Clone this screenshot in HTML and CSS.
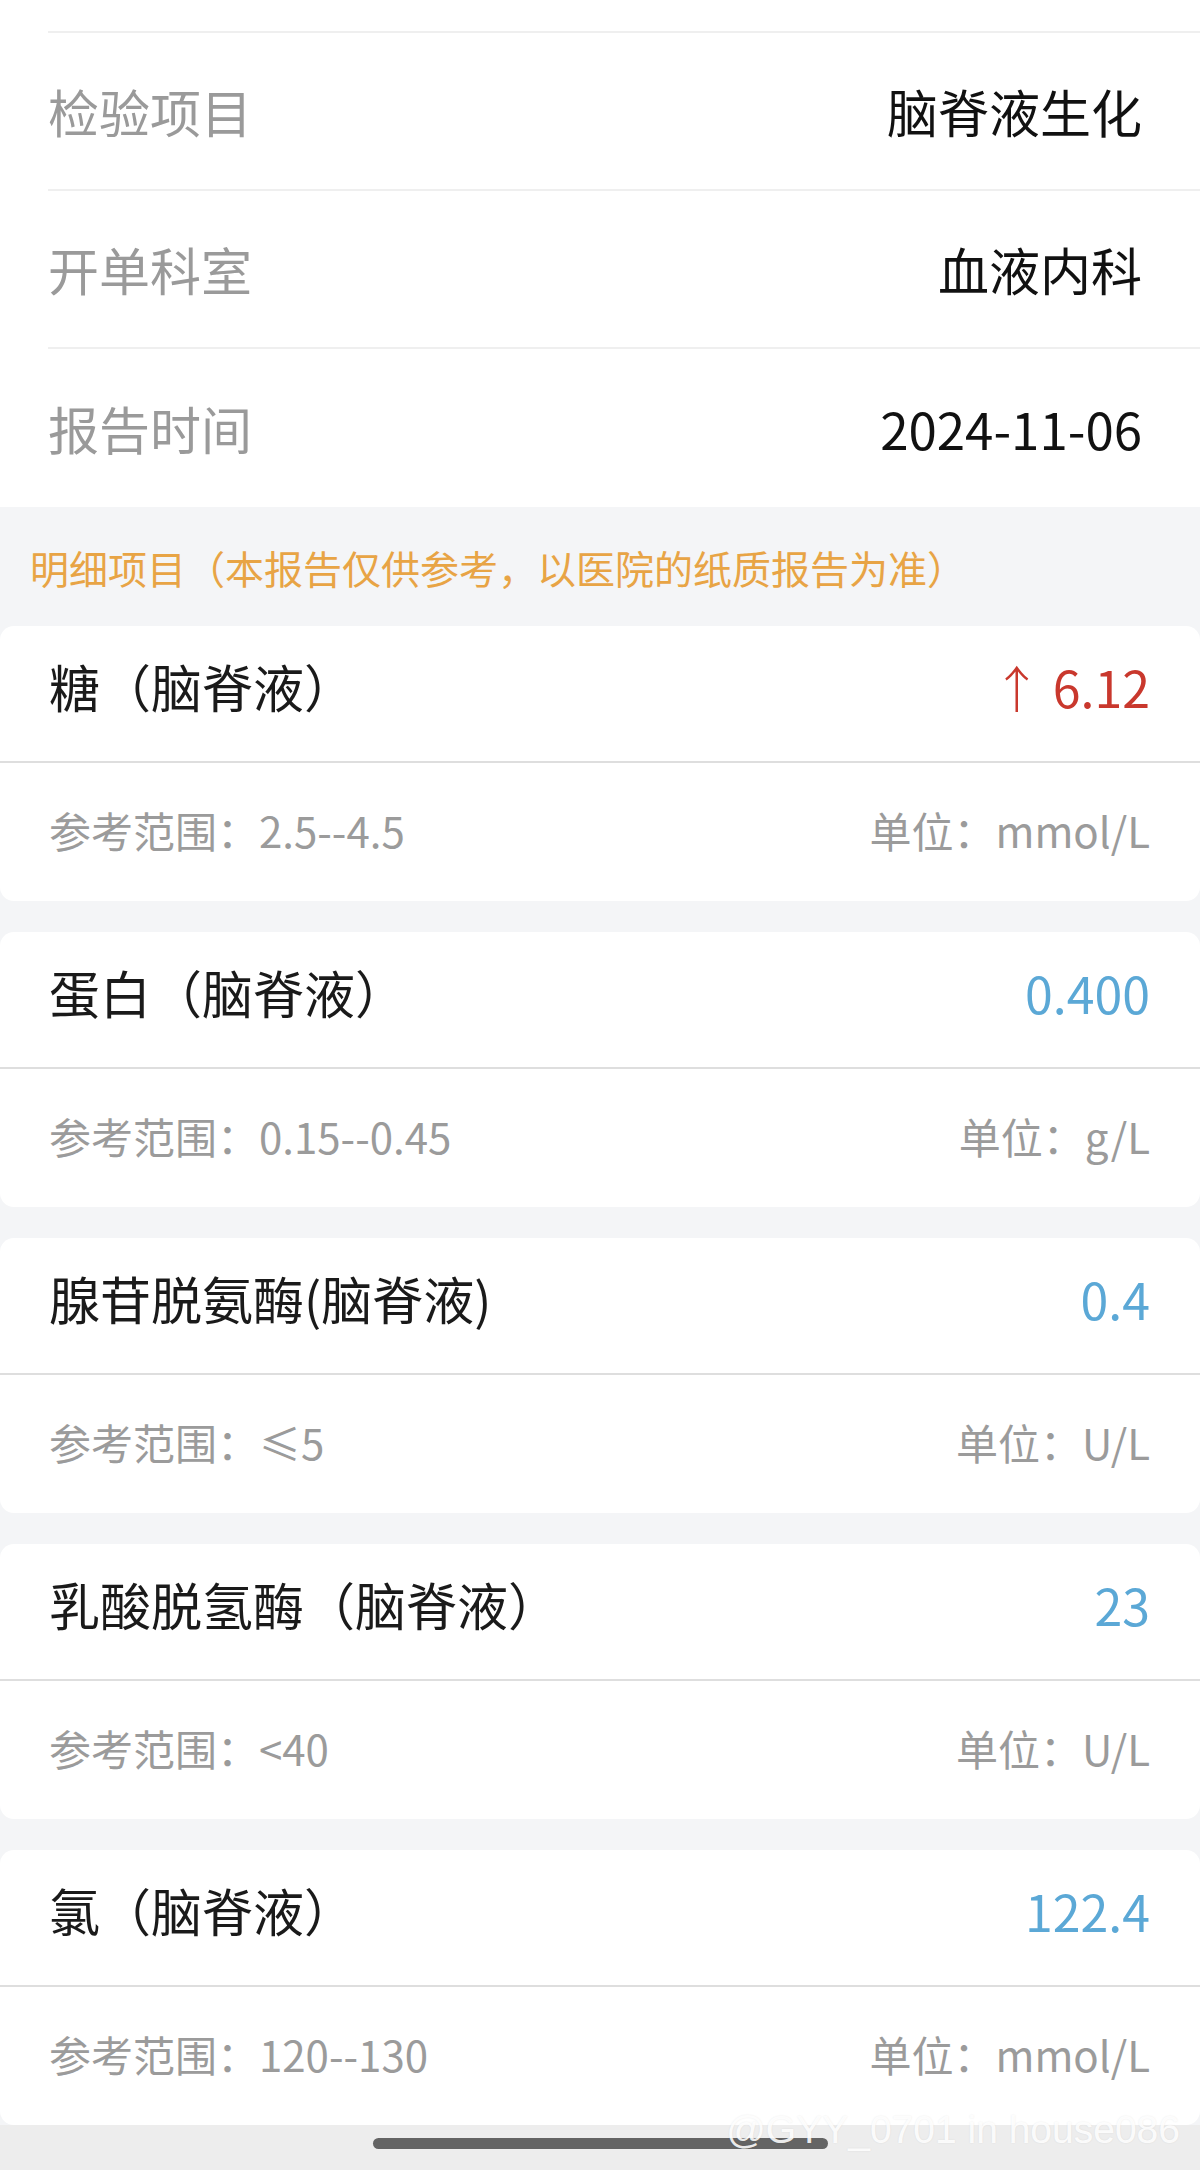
FILE: index.html
```html
<!DOCTYPE html>
<html lang="zh-CN">
<head>
<meta charset="UTF-8" />
<meta name="viewport" content="width=device-width, initial-scale=1" />
<title>检验报告详情</title>
<link rel="stylesheet" href="styles.css">
</head>
<body>

<!-- Report summary -->
<div class="info-box">
  <div class="info-row info-row-cut"></div>
  <div class="info-row">
    <span class="info-label">检验项目</span>
    <span class="info-value">脑脊液生化</span>
  </div>
  <div class="info-row">
    <span class="info-label">开单科室</span>
    <span class="info-value">血液内科</span>
  </div>
  <div class="info-row last">
    <span class="info-label">报告时间</span>
    <span class="info-value">2024-11-06</span>
  </div>
</div>

<div class="notice">明细项目（本报告仅供参考，以医院的纸质报告为准）</div>

<!-- Result items -->
<div class="item-list">
  <div class="item-card">
    <div class="item-head">
      <span class="item-name">糖（脑脊液）</span>
      <span class="item-value high"><span class="arrow">↑</span> 6.12</span>
    </div>
    <div class="item-foot">
      <span>参考范围：2.5--4.5</span>
      <span>单位：mmol/L</span>
    </div>
  </div>

  <div class="item-card">
    <div class="item-head">
      <span class="item-name">蛋白（脑脊液）</span>
      <span class="item-value">0.400</span>
    </div>
    <div class="item-foot">
      <span>参考范围：0.15--0.45</span>
      <span>单位：g/L</span>
    </div>
  </div>

  <div class="item-card">
    <div class="item-head">
      <span class="item-name">腺苷脱氨酶(脑脊液)</span>
      <span class="item-value">0.4</span>
    </div>
    <div class="item-foot">
      <span>参考范围：≤5</span>
      <span>单位：U/L</span>
    </div>
  </div>

  <div class="item-card">
    <div class="item-head">
      <span class="item-name">乳酸脱氢酶（脑脊液）</span>
      <span class="item-value">23</span>
    </div>
    <div class="item-foot">
      <span>参考范围：&lt;40</span>
      <span>单位：U/L</span>
    </div>
  </div>

  <div class="item-card">
    <div class="item-head">
      <span class="item-name">氯（脑脊液）</span>
      <span class="item-value">122.4</span>
    </div>
    <div class="item-foot">
      <span>参考范围：120--130</span>
      <span>单位：mmol/L</span>
    </div>
  </div>
</div>

<div class="bottom-bar">
  <div class="home-indicator"></div>
</div>

<div class="watermark">@GYY_0701 in house086</div>

</body>
</html>
```

FILE: styles.css
```css
/* Reset & base */
* {
  box-sizing: border-box;
}
body {
  margin: 0;
  padding: 0;
  background: #f4f5f7;
  font-family: "Noto Sans CJK SC", "Noto Sans", sans-serif;
  color: #1a1a1a;
  position: relative; /* for the watermark */
}

/* Top summary block */
.info-box {
  background: #fff;
}
.info-row {
  display: flex;
  align-items: center;
  justify-content: space-between;
  height: 158px;
  margin-left: 48px;
  padding-right: 58px;
  border-bottom: 2px solid #efefef;
  font-size: 51px;
}
.info-row.last {
  border-bottom: none;
}
/* row scrolled out of view above */
.info-row-cut {
  height: 33px;
}
.info-label {
  color: #9a9a9a;
}
.info-value {
  color: #111;
}

/* Orange hint line */
.notice {
  height: 119px;
  padding-left: 30px;
  display: flex;
  align-items: center;
  font-size: 39px;
  color: #e8a445;
}

/* Result cards */
.item-list {
  display: flex;
  flex-direction: column;
  gap: 31px;
}
.item-card {
  background: #fff;
  border-radius: 14px;
}
.item-head {
  display: flex;
  align-items: center;
  justify-content: space-between;
  height: 137px;
  padding: 0 50px 16px 49px;
  border-bottom: 2px solid #dedede;
}
.item-name {
  font-size: 51px;
  color: #1a1a1a;
}
.item-value {
  font-size: 50px;
  color: #5ba8d6;
}
.item-value.high {
  color: #c9382d;
}
.arrow {
  font-weight: 300;
}
.item-foot {
  display: flex;
  align-items: center;
  justify-content: space-between;
  height: 138px;
  padding: 0 50px 6px 49px;
  font-size: 42px;
  color: #9b9b9b;
}

/* Phone bottom area */
.bottom-bar {
  height: 46px;
  background: #ededed;
  display: flex;
  justify-content: center;
  padding-top: 13px;
}
.home-indicator {
  width: 455px;
  height: 11px;
  border-radius: 6px;
  background: #646464;
}

.watermark {
  position: absolute;
  right: 20px;
  top: 2108px;
  font-family: "Liberation Sans", sans-serif;
  font-size: 39px;
  color: rgba(255, 255, 255, 0.9);
  text-shadow: 0 0 2px rgba(0, 0, 0, 0.08);
}
```
